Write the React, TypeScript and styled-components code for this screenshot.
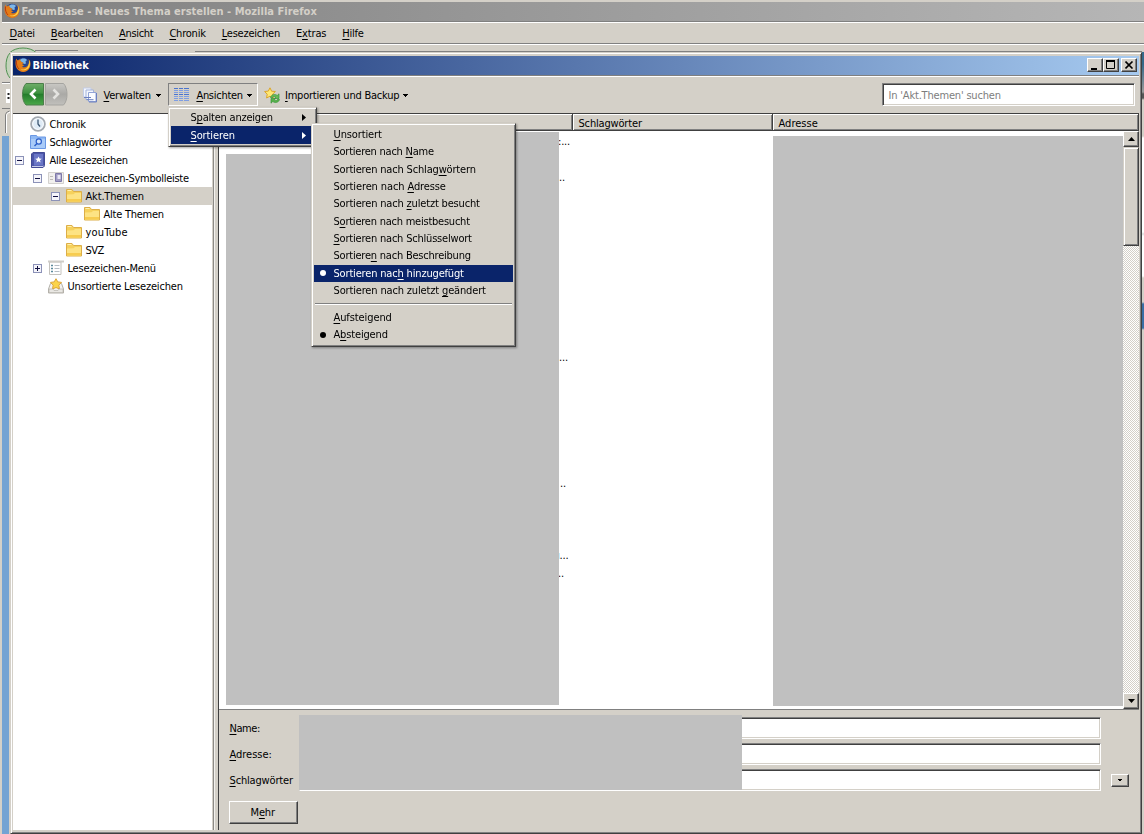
import React, { useLayoutEffect, useRef } from 'react';
import styled, { createGlobalStyle, css } from 'styled-components';

const face = '#d4d0c8';
const navy = '#0a246a';
const shade = '#808080';
const dark = '#404040';
const mask = '#c0c0c0';

const GlobalStyle = createGlobalStyle`
  * { box-sizing: border-box; }
  body { margin: 0; overflow: hidden; background: ${face}; }
  svg { display: block; flex: none; }
`;

const raised = css`
  background: ${face};
  border: 1px solid;
  border-color: ${face} ${dark} ${dark} ${face};
  box-shadow: inset 1px 1px 0 #fff, inset -1px -1px 0 ${shade};
`;

/* ---------- text ---------- */

const CaptionBox = styled.span`
  display: block;
  flex: none;
  width: ${(p: { $w: number }) => p.$w}px;
  height: 14px;
  padding: 1px 0 0 0.5px;
  line-height: 14px;
  white-space: pre;
  u { text-decoration: underline; text-decoration-thickness: 1px; text-underline-offset: 1.5px; text-decoration-skip-ink: none; }
`;

type CaptionProps = { text: string; w: number };

/* "_" marks the access key; letters are tracked so the caption fills its width. */
function Caption({ text, w }: CaptionProps) {
  const ref = useRef<HTMLSpanElement>(null);
  const at = text.indexOf('_');
  const plain = text.replace('_', '');
  useLayoutEffect(() => {
    const el = ref.current;
    if (!el) return;
    el.style.letterSpacing = '0px';
    const natural = el.getBoundingClientRect().width;
    el.style.letterSpacing = `${(w - 0.7 - natural) / plain.length}px`;
  }, [plain, w]);
  return (
    <CaptionBox $w={w}>
      <span ref={ref}>
        {at < 0 ? plain : <>{plain.slice(0, at)}<u>{plain[at]}</u>{plain.slice(at + 1)}</>}
      </span>
    </CaptionBox>
  );
}

/* ---------- browser window behind ---------- */

const Screen = styled.div`
  position: relative;
  width: 1144px;
  height: 834px;
  overflow: hidden;
  background: ${face};
  color: #000;
  font: 11px 'DejaVu Sans Condensed', 'DejaVu Sans', sans-serif;
`;
const BrowserTitle = styled.div`
  display: flex;
  align-items: center;
  gap: 1px;
  height: 19px;
  margin: 2px 0 0 2px;
  padding: 0 0 1px 2px;
  color: ${face};
  font-weight: bold;
  background: linear-gradient(90deg, #808080, #b6b6b6);
`;
const MenuBar = styled.div`
  display: flex;
  align-items: center;
  gap: 15.3px;
  height: 23px;
  margin-left: 2px;
  padding-left: 7px;
  border-top: 1px solid ${shade};
  border-bottom: 1px solid ${shade};
  box-shadow: inset 0 1px 0 #fff, 0 1px 0 #fff;
`;
const BrowserBody = styled.div`
  display: flex;
  justify-content: space-between;
  height: 790px;
  margin-top: 1px;
`;
const LeftStrip = styled.div`
  width: 10px;
  padding: 7px 0 0 2px;
`;
const DesktopEdge = styled.div`
  width: 7px;
  height: 700px;
  margin-top: 2px;
  background: #74a3d3;
`;
const RightStrip = styled.div`
  width: 2px;
  margin-top: 7px;
  background: linear-gradient(180deg, #35698a 0 12px, #9a9a9a 40px, #555 42px 46px, ${face} 48px 84px, #fff 86px 180px, #ddd 182px, #fff 184px 224px, ${face} 226px 250px, #3a6ea5 252px 276px, ${face} 278px);
`;

/* ---------- library window ---------- */

const LibraryWindow = styled.div`
  position: absolute;
  left: 10px;
  top: 52px;
  width: 1132px;
  height: 782px;
  padding: 3px 2px 1px 2px;
  display: flex;
  flex-direction: column;
  ${raised}
`;
const TitleBar = styled.div`
  display: flex;
  align-items: center;
  height: 19px;
  flex: none;
  padding: 0 2px 2px 2px;
  gap: 1px;
  color: #fff;
  font-weight: bold;
  background: linear-gradient(90deg, ${navy}, #a6caf0);
`;
const WindowButtons = styled.div`
  display: flex;
  margin-left: auto;
  button:last-child { margin-left: 2px; }
`;
const SquareButton = styled.button<{ $w: number; $h: number }>`
  ${raised}
  border-color: #fff ${dark} ${dark} #fff;
  box-shadow: inset -1px -1px 0 ${shade};
  display: flex;
  flex: none;
  align-items: center;
  justify-content: center;
  padding: 0;
  width: ${p => p.$w}px;
  height: ${p => p.$h}px;
`;
const Toolbar = styled.div`
  display: flex;
  align-items: center;
  flex: none;
  height: 39px;
  padding: 0 4px 0 9px;
  border-top: 1px solid ${shade};
  border-bottom: 1px solid ${dark};
  box-shadow: inset 0 1px 0 #fff;
`;
const ToolButton = styled.div<{ $left: number; $pad: number; $open?: boolean; $gap: number }>`
  display: flex;
  align-items: center;
  height: 23px;
  margin-left: ${p => p.$left}px;
  padding: 1px ${p => p.$pad}px 0;
  gap: ${p => p.$gap}px;
  border: 1px solid transparent;
  ${p => p.$open && `border-color: ${shade} #fff #fff ${shade};`}
`;
const SearchBox = styled.div`
  width: 253px;
  height: 23px;
  margin-left: auto;
  padding: 4px 5px;
  color: #7d7d7d;
  background: #fff;
  border: 1px solid;
  border-color: ${shade} #fff #fff ${shade};
  box-shadow: inset 1px 1px 0 ${dark}, inset -1px -1px 0 ${face};
`;
const Panes = styled.div`
  display: flex;
  flex: none;
  height: 716px;
`;
const Sidebar = styled.div`
  width: 201px;
  padding-top: 1px;
  background: #fff;
  border-right: 1px solid ${face};
`;
const Splitter = styled.div`
  width: 5px;
  background: ${face};
  border-left: 1px solid #8c8a86;
  box-shadow: inset 1px 0 0 #f4f2ee;
`;
const TreeRow = styled.div<{ $depth: number; $selected?: boolean }>`
  display: flex;
  align-items: center;
  height: 18px;
  padding-left: ${p => 2 + p.$depth * 18}px;
  background: ${p => (p.$selected ? face : 'transparent')};
`;
const Twisty = styled.span`
  width: 15px;
  flex: none;
`;
const TreeIcon = styled.span`
  width: 19px;
  flex: none;
`;
const Main = styled.div`
  flex: 1;
  display: flex;
  flex-direction: column;
  border-left: 1px solid ${dark};
`;
const Header = styled.div`
  display: grid;
  grid-template-columns: 354px 200px 1fr;
  height: 17px;
`;
const HeaderCell = styled.div`
  padding: 2px 0 0 5px;
  border-right: 1px solid ${dark};
  border-bottom: 1px solid ${dark};
  box-shadow: inset 1px 1px 0 #fff, inset -1px -1px 0 ${shade};
`;
const ListArea = styled.div`
  position: relative;
  display: flex;
  height: 579px;
  overflow: hidden;
  background: #fff;
  border-bottom: 1px solid ${shade};
`;
const Rows = styled.div`
  width: 904px;
`;
const ListRow = styled.div<{ $x: number }>`
  height: 18px;
  padding: 2px 0 0 ${p => p.$x}px;
  line-height: 17px;
  letter-spacing: -0.2px;
`;
const Masked = styled.div<{ $x: number; $y: number; $w: number; $h: number }>`
  position: absolute;
  left: ${p => p.$x}px;
  top: ${p => p.$y}px;
  width: ${p => p.$w}px;
  height: ${p => p.$h}px;
  background: ${mask};
`;
const ScrollBar = styled.div`
  display: flex;
  flex-direction: column;
  width: 16px;
  background: repeating-conic-gradient(#fff 0 25%, ${face} 0 50%) 0 0 / 2px 2px;
`;
const Thumb = styled.div`
  ${raised}
  height: 99px;
  margin-bottom: auto;
`;
const Details = styled.div`
  flex: 1;
  padding: 7px 0 0 10px;
`;
const Field = styled.div`
  display: flex;
  align-items: center;
  height: 26px;
`;
const FieldLabel = styled.div`
  width: 70px;
  flex: none;
  padding-bottom: 4px;
`;
const Input = styled.div`
  width: 802px;
  height: 22px;
  margin-bottom: 4px;
  background: linear-gradient(90deg, ${mask} 442px, #fff 442px);
  border: 1px solid;
  border-color: ${shade} #fff #fff ${mask};
  box-shadow: inset 0 1px 0 ${dark}, inset -1px -1px 0 ${face};
`;
const FieldMask = styled.div`
  position: absolute;
  left: 288px;
  top: 662px;
  width: 443px;
  height: 75px;
  background: ${mask};
`;
const DropSlot = styled.div`
  margin: 0 0 3px 10px;
`;
const MoreButton = styled.button`
  ${raised}
  border-color: #fff ${dark} ${dark} #fff;
  box-shadow: inset -1px -1px 0 ${shade};
  display: flex;
  justify-content: center;
  width: 69px;
  height: 23px;
  margin-top: 6px;
  padding: 3px 2px 0 0;
  font: inherit;
  color: #000;
  text-align: left;
`;

/* ---------- menus ---------- */

const Popup = styled.div<{ $x: number; $y: number; $w: number; $h: number; $pad: number }>`
  ${raised}
  position: absolute;
  left: ${p => p.$x}px;
  top: ${p => p.$y}px;
  width: ${p => p.$w}px;
  height: ${p => p.$h}px;
  padding: ${p => p.$pad}px 2px;
  filter: drop-shadow(1px 1px 1px rgba(0, 0, 0, 0.35));
`;
const MenuItem = styled.div<{ $active?: boolean }>`
  display: flex;
  align-items: center;
  height: 17.35px;
  color: ${p => (p.$active ? '#fff' : '#000')};
  background: ${p => (p.$active ? navy : 'transparent')};
  ${CaptionBox} { padding-top: 0.5px; }
`;
const MenuGutter = styled.span`
  width: 19px;
  padding-left: 6px;
  flex: none;
`;
const SubArrow = styled.span`
  margin-left: auto;
  padding-right: 8px;
`;
const Bullet = styled.span`
  display: block;
  width: 6px;
  height: 6px;
  border-radius: 50%;
  background: currentColor;
`;
const Divider = styled.div`
  height: 2px;
  margin: 3.5px 1px 4px;
  border-top: 1px solid ${shade};
  border-bottom: 1px solid #fff;
`;

/* ---------- icons ---------- */

const Firefox = () => (
  <svg width="16" height="16" viewBox="0 0 16 16">
    <circle cx="8" cy="7.700" r="7" fill="#27468f" />
    <path d="M4.500 3.500c2-2.500 5.500-2.500 7.500-.5l-1.500 1.500 .5 2-2 .5-1.500-1.500z" fill="#7db7e8" />
    <path d="M1.200 1.500C0 5 .3 9 2 11.800c2 3 6.500 4.200 9.800 2.200 3.300-1.900 4.300-6 3.400-9.500-.4-1.200-1.200-2-1.800-2.500.8 2 .8 4.500-.4 6.200-1.300 2-4 2.600-6 1.500l2.500-1.400c-1 0-2-.3-2.300-1.300l1.800-1-2.500-1C5.500 4 5 3.300 5.300 2.300 4.300 2.500 3.500 3 3 3.600 2.200 3.200 1.500 2.500 1.200 1.500z" fill="#e57d17" />
    <path d="M14 3c1.500 3 1.200 7-1.500 9-2 1.600-5 1.600-7 .4 3 .4 5.500-.4 7-2.500C14 8 14.300 5.500 14 3z" fill="#fbd24a" />
    <path d="M1.500 3.500C1 7 2 10 4 12" stroke="#b93a10" fill="none" />
  </svg>
);
const NavButtons = () => (
  <svg width="46" height="23" viewBox="0 0 46 23">
    <defs>
      <linearGradient id="go" x2="0" y2="1"><stop offset="0" stopColor="#6fae68" /><stop offset=".45" stopColor="#3d9140" /><stop offset=".5" stopColor="#237d2b" /><stop offset="1" stopColor="#4ba84a" /></linearGradient>
      <linearGradient id="idle" x2="0" y2="1"><stop offset="0" stopColor="#c9c8c4" /><stop offset=".5" stopColor="#aaa9a6" /><stop offset="1" stopColor="#c1c0bc" /></linearGradient>
    </defs>
    <path d="M4 .5h17.500v21.500H4C1.500 19.500.5 15.500.5 11.500S1.500 3 4 .5z" fill="url(#go)" stroke="#4b7e4a" />
    <path d="M23.500 .5h18c2.500 2.500 3.500 7 3.500 11s-1 8-3.500 10.500h-18z" fill="url(#idle)" stroke="#a5a4a0" />
    <path d="M13.500 6.500L9 11l4.500 4.500" stroke="#fff" strokeWidth="2.600" fill="none" />
    <path d="M31.500 6.500L36 11l-4.500 4.500" stroke="#e4e3e0" strokeWidth="2.600" fill="none" />
  </svg>
);
const PagesIcon = () => (
  <svg width="15" height="16" viewBox="0 0 15 16">
    <path d="M.5 1h7.500v9H.5z" fill="#f4f7fd" stroke="#c3cde8" />
    <path d="M3 3h7.500v9.500H3z" fill="#f4f7fd" stroke="#a3b3dc" />
    <path d="M5.500 5.500H13V14.500H5.500z" fill="#fafcff" stroke="#92a4d6" />
    <path d="M1 10.500h7M3.500 12.700h7M6 15h7.500V6" stroke="#6c80c0" fill="none" />
  </svg>
);
const ListIcon = () => (
  <svg width="15" height="14" viewBox="0 0 15 14" shapeRendering="crispEdges">
    {[0.5, 2.5, 4.5, 6.5, 8.5, 10.5, 12.5].map(y => (
      <path key={y} d={`M0 ${y}h4M5 ${y}h4M10 ${y}h5`} stroke={y === 0.5 || y === 6.5 ? '#4a74cf' : '#7f9ee2'} />
    ))}
  </svg>
);
const ImportIcon = () => (
  <svg width="17" height="17" viewBox="0 0 17 17">
    <path d="M6 .8l1.600 3.400 3.800.3-2.800 2.700.8 3.800L6 9.200 2.600 11l.6-3.800L.6 4.500l3.700-.4z" fill="#ffe873" stroke="#dba52c" />
    <path d="M6.500 10.500c.7-3 4.500-4 6.700-2L15 6.800v4.700h-4.700l1.500-1.500c-1.500-1-3.200-.5-3.700 1z" fill="#65bb55" stroke="#3b943d" strokeWidth=".7" />
    <path d="M15.500 12.500c-.7 3-4.500 4-6.700 2L7 16.200v-4.700h4.700L10.200 13c1.500 1 3.200.5 3.700-1z" fill="#55b249" stroke="#3b943d" strokeWidth=".7" />
  </svg>
);
const Caret = ({ w = 5 }: { w?: number }) => (
  <svg width={w} height="3" viewBox="0 0 5 3" shapeRendering="crispEdges"><path d="M0 0h5L2.500 3z" /></svg>
);
const RightArrow = () => (
  <svg width="4" height="7" viewBox="0 0 4 7"><path d="M0 0l4 3.500L0 7z" fill="currentColor" /></svg>
);
const Expander = ({ plus = false }: { plus?: boolean }) => (
  <svg width="9" height="9" viewBox="0 0 9 9" shapeRendering="crispEdges">
    <rect x=".5" y=".5" width="8" height="8" fill="#f4f4fa" stroke="#8c92b8" />
    <path d={plus ? 'M2 4.500h5M4.500 2v5' : 'M2 4.500h5'} stroke="#101040" />
  </svg>
);
const Clock = () => (
  <svg width="16" height="16" viewBox="0 0 16 16">
    <circle cx="8" cy="8" r="6.900" fill="#e8f0f8" stroke="#a3a9b0" strokeWidth="1.800" />
    <circle cx="8" cy="8" r="5.300" fill="#dfebf6" stroke="#fff" strokeWidth=".7" />
    <path d="M8 3.500V8l2 2.500" stroke="#3b5672" strokeWidth="1.300" fill="none" />
  </svg>
);
const TagFolder = () => (
  <svg width="16" height="16" viewBox="0 0 16 16">
    <path d="M.5 1.500h6l1 1.500h8v11.500H.5z" fill="#8fb9f4" stroke="#6a98e4" />
    <path d="M1 5h14v9H1z" fill="#a9cbf8" />
    <circle cx="8.800" cy="7.500" r="2.600" fill="#d4e5fc" stroke="#2d60c9" strokeWidth="1.200" />
    <path d="M7 9.500L4.500 12" stroke="#2d60c9" strokeWidth="1.500" />
  </svg>
);
const Book = () => (
  <svg width="16" height="16" viewBox="0 0 16 16">
    <path d="M1.500 2L3 .5h11.500V14L13 15.500H1.500z" fill="#4b55a8" stroke="#434b95" />
    <path d="M4 2h9v11.500H4z" fill="#6a76c6" />
    <path d="M2 14.500h11l1-1" stroke="#c9cdea" fill="none" />
    <path d="M8.500 4.500l1 2.100 2.300.2-1.800 1.500.6 2.300-2.100-1.300-2.100 1.300.6-2.300-1.800-1.500 2.300-.2z" fill="#fff" />
  </svg>
);
const ToolbarIcon = () => (
  <svg width="16" height="16" viewBox="0 0 16 16">
    <path d="M.5 2.500h15v11H.5z" fill="#f1f0ee" stroke="#d3d1ce" />
    <path d="M2 6.500h3M2 9.500h3" stroke="#bdbbb8" />
    <path d="M7.500 3.500h6v8h-6z" fill="#a29dc4" stroke="#7d78a8" />
    <path d="M9.500 5h3v4h-3z" fill="#e9e7f5" />
  </svg>
);
const Folder = () => (
  <svg width="16" height="16" viewBox="0 0 16 16">
    <path d="M.5 1.500h5.500l1.500 2h8v10.500H.5z" fill="#f6d15c" stroke="#dcae48" />
    <path d="M1 6.500l6.500-.2L9 5h6v8.500H1z" fill="#fde384" />
    <path d="M1 11h14v2.500H1z" fill="#f7cc50" />
    <path d="M1.500 2.500h4" stroke="#fff0b0" />
  </svg>
);
const MenuPage = () => (
  <svg width="16" height="16" viewBox="0 0 16 16">
    <path d="M1.500 2h11.500v12.500H1.500z" fill="#fff" stroke="#c5c3be" />
    <path d="M0 .5h16v2H0z" fill="#cfcdc8" />
    <path d="M3 5.500h2M3 8.500h2M3 11.500h2" stroke="#5b8a9c" strokeWidth="1.500" />
    <path d="M6.500 5.500h5M6.500 8.500h5M6.500 11.500h5" stroke="#b4bcc4" />
  </svg>
);
const Unsorted = () => (
  <svg width="16" height="16" viewBox="0 0 16 16">
    <path d="M2.500 5.500L.5 11v4h15v-4l-2-5.500z" fill="#f3f2f0" stroke="#b3b0a9" />
    <path d="M8 .7l1.800 3.200 3.700.5-2.700 2.700.7 3.900L8 9.500l-3.500 1.500.7-3.900-2.700-2.700 3.700-.5z" fill="#fbd44a" stroke="#dda539" />
    <path d="M1 11h4l1 1.500h4l1-1.500h4v3.500H1z" fill="#e9e7e3" stroke="#b7b4ad" strokeWidth=".7" />
  </svg>
);

/* ---------- data ---------- */

const menuBar: [string, number][] = [
  ['_Datei', 26], ['_Bearbeiten', 53], ['_Ansicht', 35], ['_Chronik', 37], ['_Lesezeichen', 59], ['E_xtras', 31], ['_Hilfe', 22],
];

type Node = { text: string; w: number; depth: number; icon: React.ReactNode; state?: 'open' | 'closed'; selected?: boolean };
const tree: Node[] = [
  { text: 'Chronik', w: 37, depth: 0, icon: <Clock /> },
  { text: 'Schlagwörter', w: 63, depth: 0, icon: <TagFolder /> },
  { text: 'Alle Lesezeichen', w: 79, depth: 0, icon: <Book />, state: 'open' },
  { text: 'Lesezeichen-Symbolleiste', w: 122, depth: 1, icon: <ToolbarIcon />, state: 'open' },
  { text: 'Akt.Themen', w: 59, depth: 2, icon: <Folder />, state: 'open', selected: true },
  { text: 'Alte Themen', w: 61, depth: 3, icon: <Folder /> },
  { text: 'youTube', w: 43, depth: 2, icon: <Folder /> },
  { text: 'SVZ', w: 19, depth: 2, icon: <Folder /> },
  { text: 'Lesezeichen-Menü', w: 89, depth: 1, icon: <MenuPage />, state: 'closed' },
  { text: 'Unsortierte Lesezeichen', w: 116, depth: 1, icon: <Unsorted /> },
];

const sortItems: [string, number, boolean?][] = [
  ['_Unsortiert', 49],
  ['Sortieren nach _Name', 101],
  ['Sortieren nach Schlag_wörtern', 143],
  ['Sortieren nach _Adresse', 113],
  ['Sortieren nach _zuletzt besucht', 147],
  ['S_ortieren nach meistbesucht', 137],
  ['_Sortieren nach Schlüsselwort', 139],
  ['Sortiere_n nach Beschreibung', 138],
  ['Sortieren nac_h hinzugefügt', 131, true],
  ['Sortieren nach zuletzt _geändert', 153],
];

const cutOff: Record<number, [number, string]> = {
  0: [339, ':...'], 2: [340, '..'], 12: [340, '...'], 19: [341, '..'], 23: [338, 'ı...'], 24: [339, '..'],
};

export default function App() {
  return (
    <Screen>
      <GlobalStyle />
      <BrowserTitle><Firefox /><Caption text="ForumBase - Neues Thema erstellen - Mozilla Firefox" w={296} /></BrowserTitle>
      <MenuBar>{menuBar.map(([t, w]) => <Caption key={t} text={t} w={w} />)}</MenuBar>
      <BrowserBody>
        <LeftStrip>
          <svg width="8" height="82" viewBox="0 0 8 82">
            <path d="M8 1C5 4 4 9 4 14s1.500 9 4 12" fill="#c3d3bb" stroke="#4f9150" />
            <path d="M0 30.500h8" stroke="#808080" /><path d="M0 31.500h8" stroke="#fff" />
            <path d="M4 37h4v14H4z" fill="#fff" /><path d="M5.500 42h2M5.500 46h2" stroke="#222" strokeWidth="2" />
            <path d="M0 56.500h8" stroke="#808080" /><path d="M3.500 81V63q0-3 4-4" fill="none" stroke="#808080" /><path d="M4.500 81V63q0-2 4-3" fill="none" stroke="#fff" />
          </svg>
          <DesktopEdge />
        </LeftStrip>
        <svg width="1132" height="8" viewBox="0 0 1132 8" shapeRendering="crispEdges">
          <path d="M0 7.500C6 1.500 20 1.500 26 7.500" fill="#c3d3bb" stroke="#4f9150" shapeRendering="auto" />
          <path d="M25 5.500h43M185 6.500h947" stroke="#808080" />
        </svg>
        <RightStrip />
      </BrowserBody>

      <LibraryWindow>
        <TitleBar>
          <Firefox />
          <Caption text="Bibliothek" w={57} />
          <WindowButtons>
            <SquareButton $w={16} $h={14}><svg width="12" height="10"><path d="M2 8h6v2H2z" /></svg></SquareButton>
            <SquareButton $w={16} $h={14}><svg width="10" height="10"><path d="M.5 1h8v7.500h-8z" fill="none" stroke="#000" /><path d="M0 1h9" stroke="#000" strokeWidth="2" /></svg></SquareButton>
            <SquareButton $w={16} $h={14}><svg width="9" height="8"><path d="M.5 .5l7 7M7.500 .5l-7 7" stroke="#000" strokeWidth="1.600" /></svg></SquareButton>
          </WindowButtons>
        </TitleBar>
        <Toolbar>
          <NavButtons />
          <ToolButton $left={14} $pad={0} $gap={5}><PagesIcon /><Caption text="_Verwalten" w={48} /><Caret /></ToolButton>
          <ToolButton $left={6} $pad={5} $gap={4} $open><ListIcon /><Caption text=" _Ansichten" w={50} /><Caret /></ToolButton>
          <ToolButton $left={5} $pad={0} $gap={3.5}><ImportIcon /><Caption text="_Importieren und Backup" w={115} /><Caret /></ToolButton>
          <SearchBox><Caption text="In 'Akt.Themen' suchen" w={113} /></SearchBox>
        </Toolbar>
        <Panes>
          <Sidebar>
            {tree.map(n => (
              <TreeRow key={n.text} $depth={n.depth} $selected={n.selected}>
                <Twisty>{n.state && <Expander plus={n.state === 'closed'} />}</Twisty>
                <TreeIcon>{n.icon}</TreeIcon>
                <Caption text={n.text} w={n.w} />
              </TreeRow>
            ))}
          </Sidebar>
          <Splitter />
          <Main>
            <Header>
              <HeaderCell />
              <HeaderCell><Caption text="Schlagwörter" w={64} /></HeaderCell>
              <HeaderCell><Caption text="Adresse" w={40} /></HeaderCell>
            </Header>
            <ListArea>
              <Rows>
                {Array.from({ length: 32 }, (_, i) => (
                  <ListRow key={i} $x={cutOff[i]?.[0] ?? 0}>{cutOff[i]?.[1]}</ListRow>
                ))}
              </Rows>
              <Masked $x={7} $y={23} $w={333} $h={551} />
              <Masked $x={93} $y={1} $w={247} $h={30} />
              <Masked $x={554} $y={5} $w={350} $h={570} />
              <ScrollBar>
                <SquareButton $w={16} $h={16}><svg width="7" height="4"><path d="M3.500 0L7 4H0z" /></svg></SquareButton>
                <Thumb />
                <SquareButton $w={16} $h={16}><svg width="7" height="4"><path d="M3.500 4L7 0H0z" /></svg></SquareButton>
              </ScrollBar>
            </ListArea>
            <Details>
              <Field><FieldLabel><Caption text="_Name:" w={31} /></FieldLabel><Input /></Field>
              <Field><FieldLabel><Caption text="_Adresse:" w={43} /></FieldLabel><Input /></Field>
              <Field>
                <FieldLabel><Caption text="_Schlagwörter" w={64} /></FieldLabel><Input />
                <DropSlot><SquareButton $w={18} $h={13}><Caret w={4} /></SquareButton></DropSlot>
              </Field>
              <MoreButton><Caption text="M_ehr" w={25} /></MoreButton>
            </Details>
          </Main>
        </Panes>
        <FieldMask />
      </LibraryWindow>

      <Popup $x={168} $y={107} $w={149} $h={40} $pad={1}>
        <MenuItem><MenuGutter /><Caption text="S_palten anzeigen" w={83} /><SubArrow><RightArrow /></SubArrow></MenuItem>
        <MenuItem $active><MenuGutter /><Caption text="_Sortieren" w={45} /><SubArrow><RightArrow /></SubArrow></MenuItem>
      </Popup>
      <Popup $x={311} $y={123} $w={205} $h={224} $pad={1.8}>
        {sortItems.map(([t, w, on]) => (
          <MenuItem key={t} $active={on}><MenuGutter>{on && <Bullet />}</MenuGutter><Caption text={t} w={w} /></MenuItem>
        ))}
        <Divider />
        <MenuItem><MenuGutter /><Caption text="_Aufsteigend" w={59} /></MenuItem>
        <MenuItem><MenuGutter><Bullet /></MenuGutter><Caption text="A_bsteigend" w={55} /></MenuItem>
      </Popup>
    </Screen>
  );
}
